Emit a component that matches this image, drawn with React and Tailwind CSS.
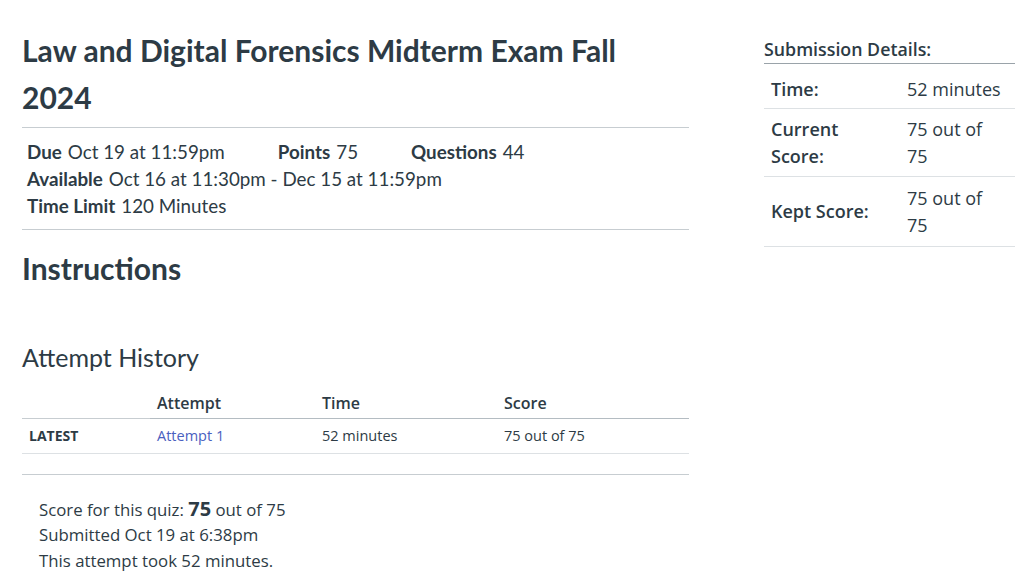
import React from "react";

const lato = { fontFamily: "Lato, 'Noto Sans', sans-serif" };
const open = { fontFamily: "'Open Sans', 'Noto Sans', sans-serif" };

const META = [
  [
    ["Due", "Oct 19 at 11:59pm"],
    ["Points", "75"],
    ["Questions", "44"],
  ],
  [["Available", "Oct 16 at 11:30pm - Dec 15 at 11:59pm"]],
  [["Time Limit", "120 Minutes"]],
];

function MetaItem({ label, value }) {
  return (
    <span className="whitespace-nowrap">
      <span className="font-bold mr-[6px]">{label}</span>
      {value}
    </span>
  );
}

export default function App() {
  return (
    <div className="flex bg-white text-[#2d3b45] w-[1024px] h-[576px] overflow-hidden">
      {/* Main column */}
      <div className="ml-[22px] w-[667px] pt-[27px]">
        <h1 className="text-[30px] leading-[47px] font-bold" style={lato}>
          Law and Digital Forensics Midterm Exam Fall
          <br />
          2024
        </h1>

        <div className="mt-[6px] border-t border-[#c7cdd1] pl-[5px] pt-[10px] pb-[10px] text-[18.8px] leading-[27px]" style={lato}>
          {META.map((row, i) => (
            <div key={i} className="flex gap-[53px]">
              {row.map(([l, v]) => (
                <MetaItem key={l} label={l} value={v} />
              ))}
            </div>
          ))}
        </div>

        <div className="border-t border-[#c7cdd1]" />

        <h2 className="mt-[19px] text-[30px] leading-[38px] font-bold" style={lato}>
          Instructions
        </h2>

        <h3 className="mt-[54px] text-[25px] leading-[32px]" style={lato}>
          Attempt History
        </h3>

        <table className="mt-[15px] w-full text-left border-collapse" style={open}>
          <thead>
            <tr className="text-[16px] font-semibold">
              <th className="w-[128px] border-b border-[#c7cdd1] h-[30px]" />
              <th className="w-[165px] px-[7px] border-b border-[#b4bcc2] font-semibold">Attempt</th>
              <th className="w-[182px] px-[7px] border-b border-[#b4bcc2] font-semibold">Time</th>
              <th className="px-[7px] border-b border-[#b4bcc2] font-semibold">Score</th>
            </tr>
          </thead>
          <tbody>
            <tr className="text-[14.5px] h-[35px] border-b border-[#dde1e4]">
              <td className="px-[7px] font-bold text-[14px]">LATEST</td>
              <td className="px-[7px] text-[#4a60c0]">Attempt 1</td>
              <td className="px-[7px]">52 minutes</td>
              <td className="px-[7px]">75 out of 75</td>
            </tr>
          </tbody>
        </table>

        <div className="mt-[20px] border-t border-[#c7cdd1]" />

        <div className="pl-[17px] pt-[21px] text-[16.8px] leading-[25.5px]" style={open}>
          <div>
            Score for this quiz: <span className="font-bold text-[20px]">75</span> out of 75
          </div>
          <div>Submitted Oct 19 at 6:38pm</div>
          <div>This attempt took 52 minutes.</div>
        </div>
      </div>

      {/* Sidebar */}
      <div className="ml-[75px] w-[251px] pt-[37px]" style={open}>
        <div className="text-[17.8px] leading-[25px] font-semibold pb-[1px] border-b border-[#9aa3a9]">
          Submission Details:
        </div>
        <div className="text-[18px] leading-[27px]">
          {[
            [["Time:"], ["52 minutes"], "h-[45px] pt-[6px]"],
            [["Current", "Score:"], ["75 out of", "75"], "h-[68px]"],
            [["Kept Score:"], ["75 out of", "75"], "h-[70px]"],
          ].map(([label, value, h], i) => (
            <div key={i} className={`flex items-center border-b border-[#dde1e4] ${h}`}>
              <div className="w-[143px] pl-[7px] font-semibold">
                {label.map((t) => (
                  <div key={t}>{t}</div>
                ))}
              </div>
              <div>
                {value.map((t, j) => (
                  <div key={j}>{t}</div>
                ))}
              </div>
            </div>
          ))}
        </div>
      </div>
    </div>
  );
}
